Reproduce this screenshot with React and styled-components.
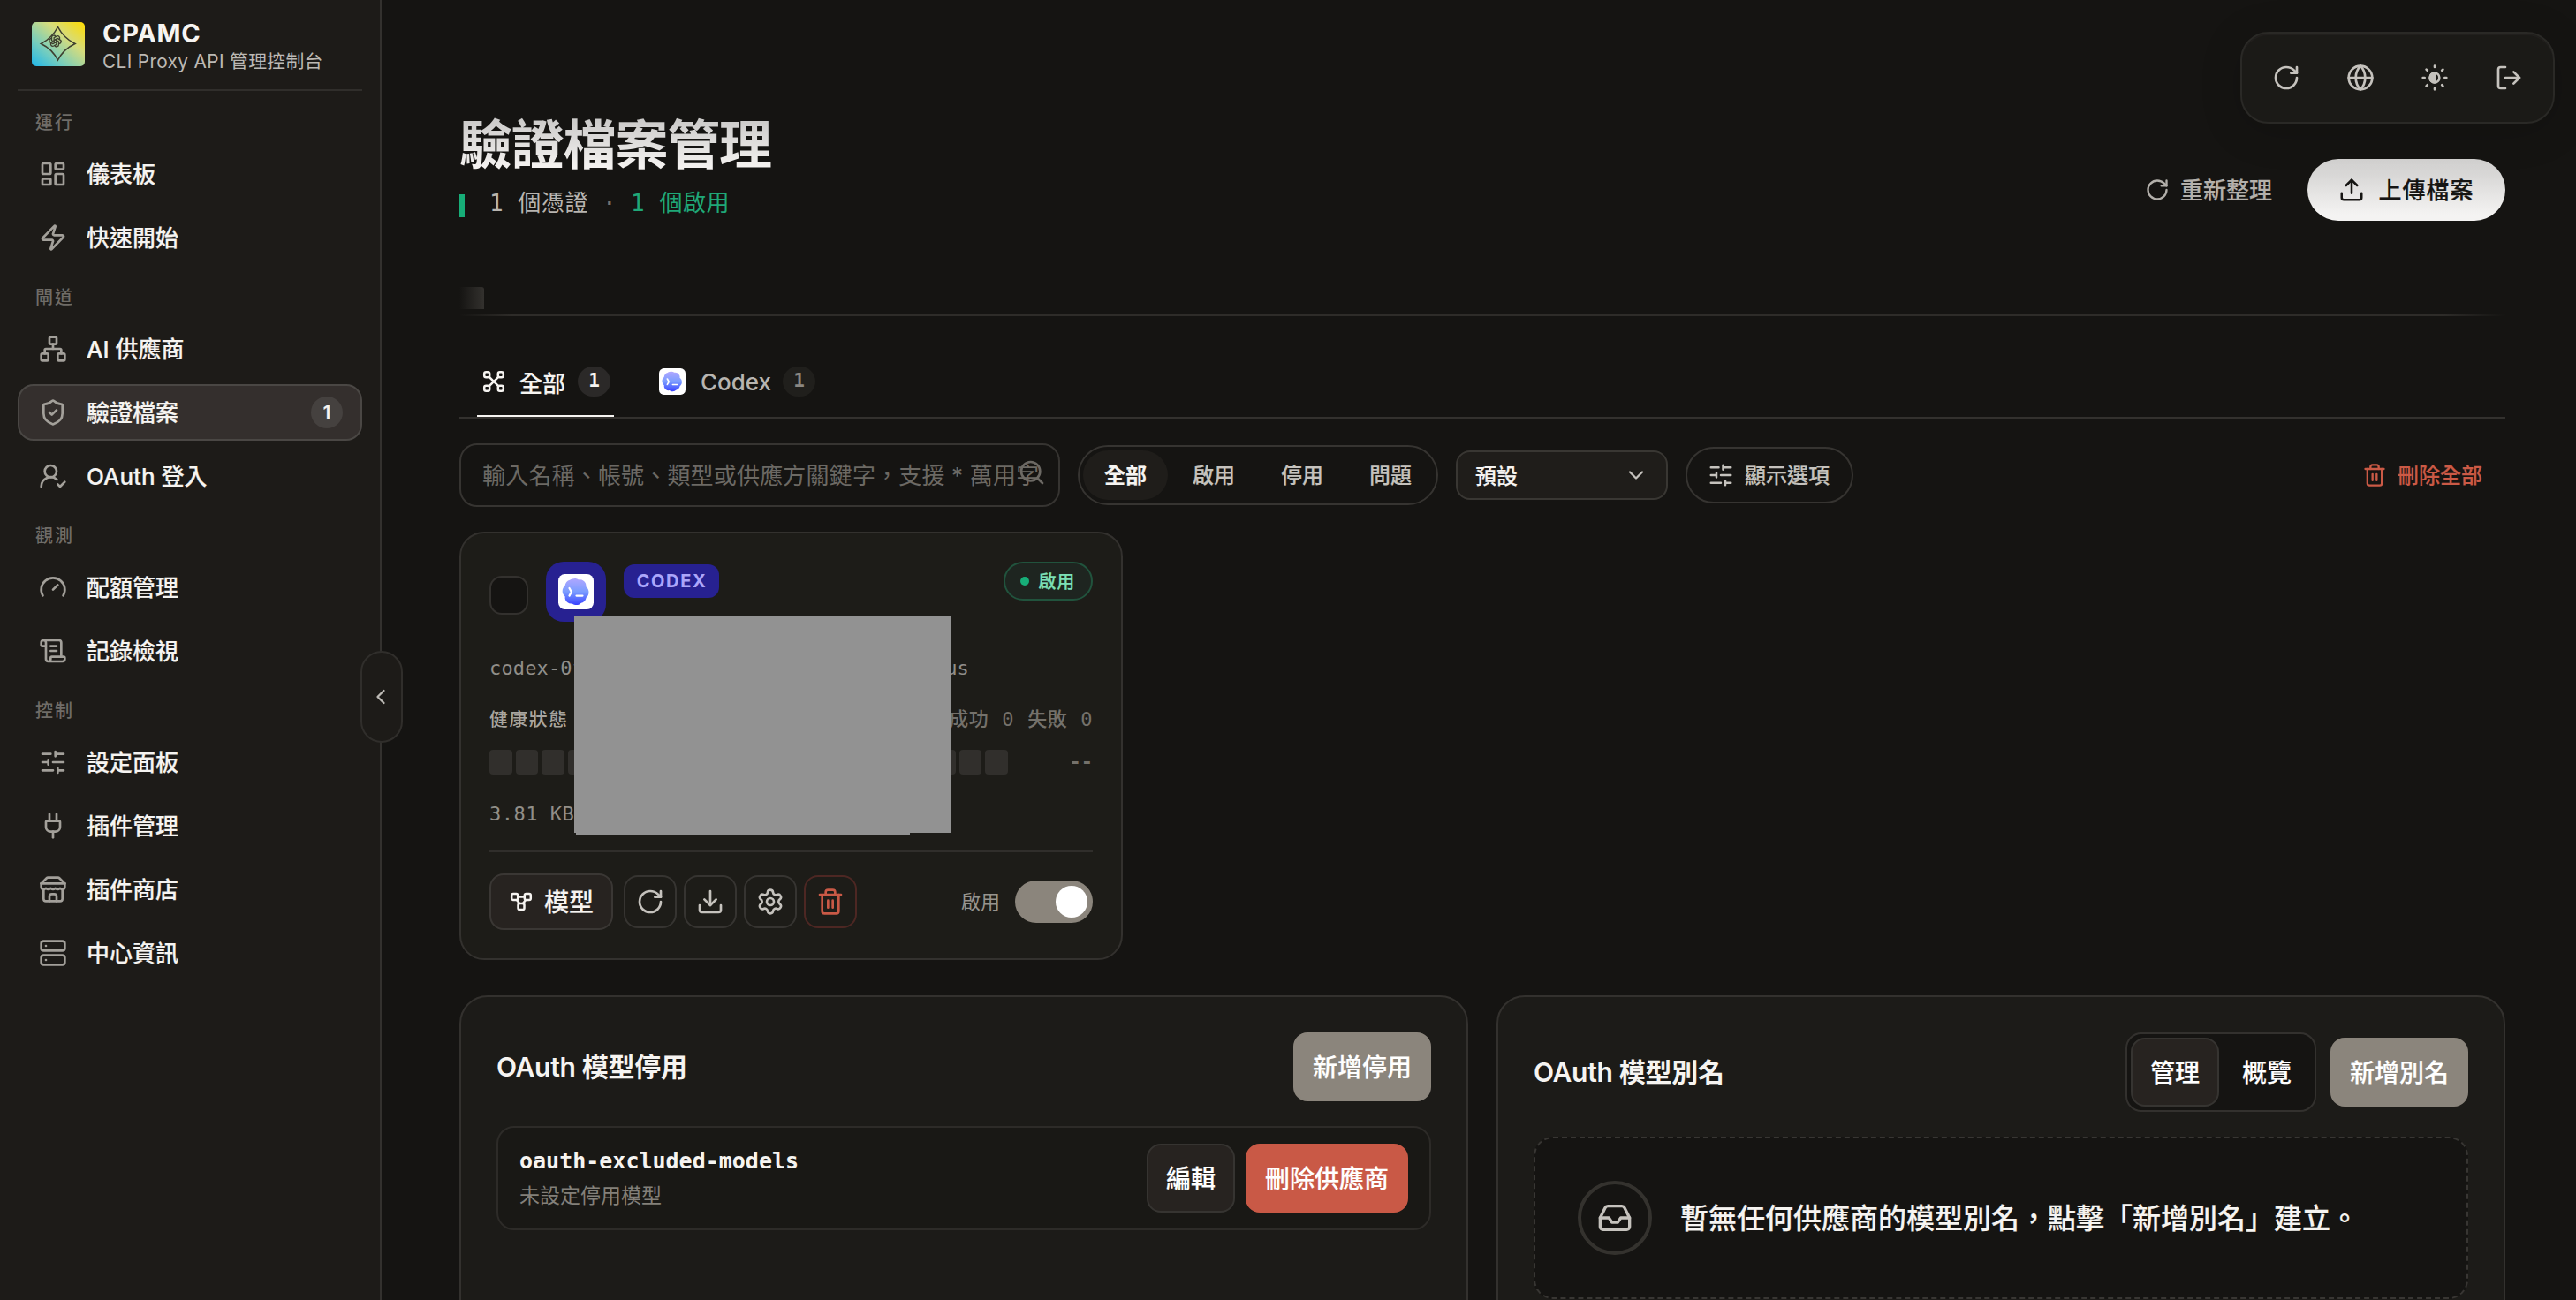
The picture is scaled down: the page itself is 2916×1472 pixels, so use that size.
import React, { useState } from "react";
import styled, { createGlobalStyle, css } from "styled-components";
import {
  ChevronDown,
  ChevronLeft,
  Download,
  Gauge,
  Globe,
  Inbox,
  LayoutDashboard,
  LogOut,
  Network,
  Plug,
  RotateCw,
  ScrollText,
  Search,
  Server,
  Settings,
  ShieldCheck,
  Trash2,
  Upload,
  Zap
} from "lucide-react";
import { TbBrandOpenai } from "react-icons/tb";

const sans = `Inter, "Noto Sans CJK TC", sans-serif`;
const mono = `"DejaVu Sans Mono", "Noto Sans CJK TC", monospace`;

// The CJK family has no 600, so medium gets a thin outline
const semibold = css`
  font-weight: 500;
  -webkit-text-stroke: 0.2px currentColor;
`;

const GlobalStyle = createGlobalStyle`
  * {
    box-sizing: border-box;
  }
  body {
    margin: 0;
    background: #151412;
    font-family: ${sans};
    color: #f6f4f1;
  }
  button {
    font-family: inherit;
    padding: 0;
    border: 0;
    background: none;
    color: inherit;
  }
  svg {
    display: block;
    flex-shrink: 0;
  }
`;

const Page = styled.div`
  position: relative;
  display: flex;
  width: 100%;
  height: 1472px;
  overflow: hidden;
`;

/* ---------- sidebar ---------- */

const Sidebar = styled.aside`
  position: relative;
  width: 432px;
  flex-shrink: 0;
  padding: 0 20px;
  background: #1d1b18;
  border-right: 2px solid #33312e;
`;

const Brand = styled.div`
  display: flex;
  align-items: center;
  gap: 20px;
  height: 103px;
  padding: 0 16px 1px;
  border-bottom: 2px solid #302e2b;
  .name {
    margin-top: 5px;
    font-size: 29px;
    font-weight: 700;
    line-height: 34px;
    letter-spacing: 0.7px;
  }
  .sub {
    font-size: 20.8px;
    line-height: 30px;
    letter-spacing: 0.35px;
    color: #bcb9b4;
    white-space: nowrap;
  }
`;

const GroupLabel = styled.div`
  padding: 20px 20px 10px;
  font-size: 20px;
  font-weight: 500;
  line-height: 32px;
  letter-spacing: 2px;
  color: #6f6c67;
`;

const NavList = styled.div`
  display: flex;
  flex-direction: column;
  gap: 8px;
`;

const NavItem = styled.a`
  display: flex;
  align-items: center;
  height: 64px;
  padding: 0 20px 0 22px;
  border: 2px solid ${p => (p.$active ? "#4a4744" : "transparent")};
  border-radius: 18px;
  background: ${p => (p.$active ? "#342f2d" : "none")};
  font-size: 26px;
  ${semibold}
  svg {
    margin-right: 22px;
    color: #a3a09a;
  }
  .text {
    padding-bottom: 4px;
  }
`;

const NavBadge = styled.span`
  margin-left: auto;
  width: 36px;
  height: 36px;
  border-radius: 18px;
  background: #45413f;
  font-size: 20px;
  font-weight: 600;
  line-height: 36px;
  text-align: center;
`;

const CollapseHandle = styled.button`
  position: absolute;
  top: 737px;
  right: -26px;
  display: flex;
  align-items: center;
  justify-content: center;
  width: 48px;
  height: 104px;
  padding-right: 2px;
  border: 2px solid #302e2b;
  border-radius: 24px;
  background: #1d1b18;
  color: #bcb9b4;
`;

/* ---------- top bar ---------- */

const FloatingBar = styled.div`
  position: absolute;
  top: 36px;
  right: 24px;
  display: flex;
  gap: 12px;
  padding: 14px;
  border: 2px solid #2a2926;
  border-radius: 32px;
  background: #1b1a17;
  box-shadow: inset 0 2px 0 #211f1d, 0 8px 48px rgba(0, 0, 0, 0.15);
  button {
    display: flex;
    align-items: center;
    justify-content: center;
    width: 72px;
    height: 72px;
    color: #c5c2bd;
  }
`;

const Main = styled.main`
  flex: 1;
  min-width: 0;
  padding: 128px 80px 0 88px;
`;

const Hero = styled.header`
  display: flex;
  justify-content: space-between;
  height: 122px;
  h1 {
    margin: 0;
    font-size: 60px;
    font-weight: 700;
    line-height: 72px;
    letter-spacing: -1.2px;
    color: transparent;
    background: linear-gradient(#c6c5c4 0%, #f4f2f0 85%);
    background-clip: text;
    -webkit-background-clip: text;
  }
`;

const Summary = styled.div`
  display: flex;
  align-items: center;
  margin-top: 14px;
  font-family: ${mono};
  font-size: 26px;
  line-height: 32px;
  letter-spacing: 0.52px;
  color: #b8b5b0;
  .bar {
    width: 6px;
    height: 26px;
    margin: 6px 28px 0 0;
    background: #17ae78;
  }
  .dot {
    margin: 0 16px;
    color: #76736e;
  }
  .on {
    color: #1fa878;
  }
`;

const HeroActions = styled.div`
  display: flex;
  gap: 40px;
  height: 70px;
  margin-top: 52px;
`;

const GhostButton = styled.button`
  display: flex;
  align-items: center;
  gap: 12px;
  font-size: 26px;
  ${semibold}
  color: #b3b0ab;
  span {
    padding-bottom: 3px;
  }
`;

const UploadButton = styled.button`
  display: flex;
  align-items: center;
  justify-content: center;
  gap: 15px;
  width: 224px;
  border-radius: 35px;
  background: linear-gradient(#d2d1d0, #d8d7d6 25%, #f4f3f2 90%);
  font-size: 26px;
  ${semibold}
  letter-spacing: 1px;
  color: #161513;
  span {
    padding-bottom: 3px;
  }
`;

const HeroRule = styled.div`
  margin-top: 75px;
  &::before {
    content: "";
    display: block;
    width: 28px;
    height: 25px;
    border-radius: 0 3px 0 0;
    background: linear-gradient(90deg, transparent, #33312e);
  }
  &::after {
    content: "";
    display: block;
    height: 2px;
    margin-top: 6px;
    background: linear-gradient(90deg, transparent, #2e2c29 60px, #2e2c29 calc(100% - 70px), transparent);
  }
`;

const Tabs = styled.div`
  display: flex;
  align-items: flex-end;
  gap: 47px;
  height: 116px;
  padding-left: 20px;
  border-bottom: 2px solid #33312e;
`;

const Tab = styled.div`
  display: flex;
  align-items: center;
  height: 80px;
  padding: 2px 4px 0;
  border-bottom: 2px solid ${p => (p.$active ? "#f6f4f1" : "transparent")};
  font-size: 26px;
  ${p => (p.$active ? semibold : "font-weight: 500;")}
  color: ${p => (p.$active ? "#f6f4f1" : "#b8b5b0")};
  svg {
    margin-right: ${p => (p.$active ? 14 : 17)}px;
  }
  span {
    width: 37px;
    height: 34px;
    margin-left: ${p => (p.$active ? 14 : 13)}px;
    border-radius: 18px;
    background: ${p => (p.$active ? "#2b2928" : "#201f1c")};
    color: ${p => (p.$active ? "#f6f4f1" : "#8a8782")};
    font-family: ${mono};
    font-size: 21px;
    font-weight: 700;
    line-height: 33px;
    text-align: center;
    -webkit-text-stroke: 0;
  }
`;

/* ---------- filters ---------- */

const Filters = styled.div`
  display: flex;
  align-items: center;
  gap: 20px;
  height: 72px;
  margin-top: 28px;
`;

const SearchBox = styled.div`
  position: relative;
  width: 680px;
  height: 72px;
  padding: 0 24px;
  border: 2px solid #363431;
  border-radius: 20px;
  font-size: 26px;
  line-height: 70px;
  letter-spacing: 0.18px;
  color: #6c6964;
  white-space: nowrap;
  svg {
    position: absolute;
    top: 15px;
    right: 14px;
  }
`;

const Segmented = styled.div`
  display: flex;
  gap: 4px;
  height: 68px;
  padding: 4px;
  border: 2px solid #363431;
  border-radius: 34px;
`;

const Segment = styled.button`
  width: 96px;
  height: 56px;
  border-radius: 28px;
  background: ${p => (p.$active ? "#1f1d1a" : "none")};
  font-size: 24px;
  ${semibold}
  font-weight: ${p => (p.$active ? 700 : 500)};
  line-height: 57px;
  color: ${p => (p.$active ? "#f6f4f1" : "#c5c2bd")};
`;

const Select = styled.div`
  display: flex;
  align-items: center;
  justify-content: space-between;
  width: 240px;
  height: 56px;
  padding: 0 20px;
  border: 2px solid #393733;
  border-radius: 16px;
  background: #1f1d1a;
  font-size: 24px;
  ${semibold}
  span {
    padding-bottom: 2px;
  }
  svg {
    color: #c5c2bd;
  }
`;

const OptionsButton = styled.button`
  display: flex;
  align-items: center;
  justify-content: center;
  gap: 12px;
  width: 190px;
  height: 64px;
  padding-right: 2px;
  border: 2px solid #363431;
  border-radius: 32px;
  font-size: 24px;
  ${semibold}
  color: #c5c2bd;
  span {
    padding-bottom: 3px;
  }
`;

const DeleteAll = styled.button`
  display: flex;
  align-items: center;
  gap: 12px;
  margin-left: auto;
  padding-right: 26px;
  font-size: 24px;
  ${semibold}
  color: #cb5a46;
  span {
    padding-bottom: 3px;
  }
`;

/* ---------- credential card ---------- */

const Card = styled.section`
  position: relative;
  width: 751px;
  height: 485px;
  margin-top: 28px;
  padding: 32px;
  border: 2px solid #33312e;
  border-radius: 28px;
  background: #1d1c18;
`;

const CardHeader = styled.div`
  display: flex;
  align-items: flex-start;
  height: 68px;
`;

const Checkbox = styled.div`
  width: 44px;
  height: 44px;
  margin: 16px 20px 0 0;
  border: 2px solid #33312e;
  border-radius: 14px;
  background: #151412;
`;

const ProviderIcon = styled.div`
  display: flex;
  align-items: center;
  justify-content: center;
  width: 68px;
  height: 68px;
  border-radius: 20px;
  background: #272191;
`;

const ProviderTag = styled.div`
  width: 108px;
  height: 38px;
  margin: 3px 0 0 20px;
  border-radius: 12px;
  background: #272191;
  font-size: 20px;
  font-weight: 700;
  line-height: 39px;
  letter-spacing: 1.6px;
  text-indent: 1px;
  text-align: center;
  color: #aba6fa;
`;

const StatusPill = styled.div`
  display: flex;
  align-items: center;
  gap: 10px;
  height: 44px;
  margin-left: auto;
  padding: 0 18px 0 17px;
  border: 2px solid #21533d;
  border-radius: 22px;
  background: #1e2520;
  font-size: 20px;
  ${semibold}
  letter-spacing: 0.8px;
  color: #7ce0b6;
  span {
    padding-bottom: 2px;
  }
  &::before {
    content: "";
    width: 10px;
    height: 10px;
    border-radius: 5px;
    background: #17ae78;
  }
`;

const FileName = styled.div`
  display: flex;
  width: 543px;
  justify-content: space-between;
  margin-top: 39px;
  font-family: ${mono};
  font-size: 22px;
  line-height: 28px;
  letter-spacing: 0.15px;
  color: #918e88;
`;

const HealthRow = styled.div`
  display: flex;
  justify-content: space-between;
  margin-top: 30px;
  line-height: 28px;
  .label {
    font-size: 20.8px;
    font-weight: 500;
    letter-spacing: 1.6px;
    color: #a8a59f;
  }
  .stats {
    font-family: ${mono};
    font-size: 22px;
    font-weight: 500;
    letter-spacing: 0.45px;
    word-spacing: 1.5px;
    color: #74716b;
  }
`;

const HealthBlocks = styled.div`
  display: flex;
  gap: 4px;
  height: 28px;
  margin-top: 20px;
  i {
    flex: 1;
    border-radius: 4px;
    background: #312f2c;
  }
  span {
    width: 92px;
    text-align: right;
    font-family: ${mono};
    font-size: 22px;
    font-weight: 700;
    line-height: 28px;
    color: #74716b;
  }
`;

const FileSize = styled.div`
  margin-top: 30px;
  padding-bottom: 28px;
  border-bottom: 2px solid #302e2b;
  font-family: ${mono};
  font-size: 22px;
  line-height: 29px;
  height: 58px;
  letter-spacing: 0.5px;
  color: #918e88;
`;

const CardFooter = styled.div`
  display: flex;
  align-items: center;
  gap: 8px;
  height: 64px;
  margin-top: 24px;
`;

const ModelButton = styled.button`
  display: flex;
  align-items: center;
  justify-content: center;
  gap: 12px;
  width: 140px;
  height: 64px;
  margin-right: 4px;
  border: 2px solid #3a3734;
  border-radius: 16px;
  background: #272320;
  font-size: 28px;
  ${semibold}
  span {
    padding-bottom: 2px;
  }
`;

const IconButton = styled.button`
  display: flex;
  align-items: center;
  justify-content: center;
  width: 60px;
  height: 60px;
  border: 2px solid ${p => (p.$danger ? "#4d2723" : "#363431")};
  border-radius: 16px;
  color: ${p => (p.$danger ? "#c95946" : "#c5c2bd")};
`;

const Toggle = styled.label`
  display: flex;
  align-items: center;
  gap: 17px;
  margin-left: auto;
  font-size: 22px;
  color: #97948e;
  span {
    padding-bottom: 4px;
  }
  i {
    width: 88px;
    height: 48px;
    padding: 6px;
    border-radius: 24px;
    background: #8b857c;
  }
  i::after {
    content: "";
    display: block;
    width: 36px;
    height: 36px;
    margin-left: auto;
    border-radius: 50%;
    background: #fff;
  }
`;

// Opaque cover over the private part of the card
const Redaction = styled.div`
  position: absolute;
  top: 93px;
  left: 128px;
  width: 427px;
  height: 246px;
  background: #929292;
  &::after {
    content: "";
    position: absolute;
    top: 100%;
    left: 2px;
    width: 378px;
    height: 2px;
    background: #929292;
  }
`;

/* ---------- OAuth panels ---------- */

const Panels = styled.div`
  display: grid;
  grid-template-columns: 1fr 1fr;
  gap: 32px;
  height: 420px;
  margin-top: 40px;
`;

const Panel = styled.section`
  padding: 40px;
  border: 2px solid #33312e;
  border-radius: 32px;
  background: #1c1b18;
`;

const PanelHeader = styled.div`
  display: flex;
  align-items: center;
  gap: 16px;
  margin-bottom: 28px;
  h2 {
    margin: 0 auto 0 0;
    font-size: 30px;
    font-weight: 600;
    line-height: 40px;
    letter-spacing: -0.3px;
  }
`;

const variants = {
  primary: css`
    background: #8b857c;
    border-color: #8b857c;
  `,
  secondary: css`
    background: #272320;
    border-color: #363431;
  `,
  danger: css`
    background: #c95946;
    border-color: #c95946;
  `,
  plain: css`
    background: none;
    border-color: transparent;
  `
};

const Button = styled.button`
  height: 78px;
  padding: 0 20px 2px;
  border: 2px solid;
  border-radius: 16px;
  font-size: 28px;
  ${semibold}
  white-space: nowrap;
  color: #fff;
  ${p => variants[p.$variant]}
`;

const ViewSwitch = styled.div`
  display: flex;
  gap: 4px;
  padding: 4px;
  border: 2px solid #33312e;
  border-radius: 18px;
  background: #151412;
`;

const ExcludedRow = styled.div`
  display: flex;
  align-items: center;
  gap: 12px;
  height: 118px;
  padding: 0 24px;
  border: 2px solid #2d2b28;
  border-radius: 20px;
  background: #191815;
  .text {
    margin: 2px auto 0 0;
  }
  .key {
    font-family: ${mono};
    font-size: 25px;
    font-weight: 700;
    line-height: 38px;
  }
  .hint {
    font-size: 23px;
    line-height: 40px;
    color: #83807a;
  }
`;

const EmptyState = styled.div`
  display: flex;
  align-items: center;
  gap: 32px;
  height: 184px;
  padding: 0 48px;
  border: 2px dashed #383633;
  border-radius: 22px;
  background: #151412;
  font-size: 32px;
  ${semibold}
  .message {
    padding-bottom: 4px;
  }
  .circle {
    display: flex;
    align-items: center;
    justify-content: center;
    width: 84px;
    height: 84px;
    border: 4px solid #34322e;
    border-radius: 50%;
    color: #c5c2bd;
  }
`;

/* ---------- custom icons ---------- */

const stroke = {
  fill: "none",
  stroke: "currentColor",
  strokeWidth: 2,
  strokeLinecap: "round",
  strokeLinejoin: "round"
};

const UserCheckIcon = ({ size }) => (
  <svg width={size} height={size} viewBox="0 0 24 24" {...stroke}>
    <path d="M2 21a8 8 0 0 1 13.292-6" />
    <circle cx="10" cy="8" r="5" />
    <path d="m16 19 2 2 4-4" />
  </svg>
);

const SlidersIcon = ({ size }) => (
  <svg width={size} height={size} viewBox="0 0 24 24" {...stroke}>
    <path d="M10 5H3M12 19H3M14 3v4M16 17v4M21 12h-9M21 19h-5M21 5h-7M8 10v4M8 12H3" />
  </svg>
);

const StoreIcon = ({ size }) => (
  <svg width={size} height={size} viewBox="0 0 24 24" {...stroke}>
    <path d="m2 7 4.41-4.41A2 2 0 0 1 7.83 2h8.34a2 2 0 0 1 1.42.59L22 7" />
    <path d="M4 12v8a2 2 0 0 0 2 2h12a2 2 0 0 0 2-2v-8" />
    <path d="M15 22v-4a2 2 0 0 0-2-2h-2a2 2 0 0 0-2 2v4M2 7h20" />
    <path d="M22 7v3a2 2 0 0 1-2 2 2.7 2.7 0 0 1-1.59-.63.7.7 0 0 0-.82 0A2.7 2.7 0 0 1 16 12a2.7 2.7 0 0 1-1.59-.63.7.7 0 0 0-.82 0A2.7 2.7 0 0 1 12 12a2.7 2.7 0 0 1-1.59-.63.7.7 0 0 0-.82 0A2.7 2.7 0 0 1 8 12a2.7 2.7 0 0 1-1.59-.63.7.7 0 0 0-.82 0A2.7 2.7 0 0 1 4 12a2 2 0 0 1-2-2V7" />
  </svg>
);

const ThemeIcon = () => (
  <svg width="32" height="32" viewBox="0 0 24 24" {...stroke}>
    <circle cx="12" cy="12" r="4" />
    <path d="M12 8a4 4 0 0 0 0 8z" fill="currentColor" />
    <path d="M12 2v1M12 21v1M4.93 4.93l.9.9M18.17 18.17l.9.9M2 12h1.5M20.5 12H22M5.83 18.17l-.9.9M19.07 4.93l-.9.9" />
  </svg>
);

const AllIcon = () => (
  <svg width="30" height="28" viewBox="0 0 30 28" {...stroke} strokeWidth="2.5">
    <rect x="4.2" y="3.2" width="6" height="6" rx="2" />
    <rect x="19.8" y="3.2" width="6" height="6" rx="2" />
    <rect x="4.2" y="18.8" width="6" height="6" rx="2" />
    <rect x="19.8" y="18.8" width="6" height="6" rx="2" />
    <path d="m9.8 8.8 10.4 10.4M20.2 8.8 9.8 19.2" />
  </svg>
);

const ModelIcon = () => (
  <svg width="28" height="28" viewBox="0 0 28 28" {...stroke} strokeWidth="2.5">
    <rect x="3.2" y="5" width="7" height="7" rx="1.8" />
    <rect x="17.8" y="5" width="7" height="7" rx="1.8" />
    <rect x="10.5" y="16" width="7" height="7" rx="1.8" />
    <path d="M10.2 8.5h7.6M9 12l3 4M19 12l-3 4" />
  </svg>
);

const CodexLogo = ({ size }) => (
  <svg width={size} height={size} viewBox="0 0 40 40">
    <defs>
      <linearGradient id="codex" x1="0" y1="0" x2="0" y2="1">
        <stop offset="0" stopColor="#b1a7ff" />
        <stop offset="0.5" stopColor="#7a9dff" />
        <stop offset="1" stopColor="#3941ff" />
      </linearGradient>
    </defs>
    <rect width="40" height="40" rx="7.5" fill="#fff" />
    <path
      fill="url(#codex)"
      d="M16 5.4c2.6-1 5.2-.5 7 1 3.2-.7 6.6 1 7.9 4.2.5 1.2.6 2.500.4 3.700 2.500 1.900 3.600 4.700 3.100 7.600-.4 2.200-1.400 3.700-2.900 4.900-.4 3.300-2.900 5.700-6 6.100-2 2.200-4.900 2.700-7.500 1.800-.9-.3-1.600-.8-2.200-1.300-3.300.6-6.500-1.100-7.700-4.100-.5-1.200-.6-2.600-.4-3.800-2.400-1.900-3.500-4.800-2.900-7.700.4-1.900 1.400-3.400 2.800-4.500.3-3.500 2.500-6 5.400-6.600.8-.7 1.800-1.100 3-1.300Z"
    />
    <path d="m12.5 16 2.4 4.3-2.4 4.3M20.5 24.6h7" fill="none" stroke="#fff" strokeWidth="2.2" strokeLinecap="round" strokeLinejoin="round" />
  </svg>
);

const BrandLogo = () => (
  <svg width="60" height="50" viewBox="0 0 60 50">
    <defs>
      <linearGradient id="brand" x1="0" y1="1" x2="1" y2="0">
        <stop offset="0" stopColor="#1fb6ea" />
        <stop offset="0.3" stopColor="#74cdbf" />
        <stop offset="0.65" stopColor="#d6dc7c" />
        <stop offset="1" stopColor="#ffdc00" />
      </linearGradient>
    </defs>
    <rect width="60" height="50" rx="5" fill="url(#brand)" />
    <path d="M29.5 5.5Q36 18 49 24.5 36 30.500 29.500 43 23 30.500 10.500 24.500 23 18 29.500 5.500Z" fill="none" stroke="#3f4030" strokeWidth="1.6" />
    <TbBrandOpenai x="18.5" y="13.5" width="22" height="22" color="#3f4030" strokeWidth="2" />
  </svg>
);

/* ---------- data ---------- */

const navGroups = [
  {
    label: "運行",
    items: [
      { name: "儀表板", icon: LayoutDashboard },
      { name: "快速開始", icon: Zap }
    ]
  },
  {
    label: "閘道",
    items: [
      { name: "AI 供應商", icon: Network },
      { name: "驗證檔案", icon: ShieldCheck, badge: 1 },
      { name: "OAuth 登入", icon: UserCheckIcon }
    ]
  },
  {
    label: "觀測",
    items: [
      { name: "配額管理", icon: Gauge },
      { name: "記錄檢視", icon: ScrollText }
    ]
  },
  {
    label: "控制",
    items: [
      { name: "設定面板", icon: SlidersIcon },
      { name: "插件管理", icon: Plug },
      { name: "插件商店", icon: StoreIcon },
      { name: "中心資訊", icon: Server }
    ]
  }
];

const statusFilters = ["全部", "啟用", "停用", "問題"];

const AuthFileCard = () => (
  <Card>
    <CardHeader>
      <Checkbox />
      <ProviderIcon>
        <CodexLogo size={40} />
      </ProviderIcon>
      <ProviderTag>CODEX</ProviderTag>
      <StatusPill><span>啟用</span></StatusPill>
    </CardHeader>
    <FileName>
      <span>codex-0f</span>
      <span>us</span>
    </FileName>
    <HealthRow>
      <span className="label">健康狀態</span>
      <span className="stats">成功 0 失敗 0</span>
    </HealthRow>
    <HealthBlocks>
      {Array.from({ length: 20 }, (_, i) => (
        <i key={i} />
      ))}
      <span>--</span>
    </HealthBlocks>
    <FileSize>3.81 KB</FileSize>
    <CardFooter>
      <ModelButton>
        <ModelIcon />
        <span>模型</span>
      </ModelButton>
      <IconButton><RotateCw size={32} /></IconButton>
      <IconButton><Download size={32} /></IconButton>
      <IconButton><Settings size={32} /></IconButton>
      <IconButton $danger><Trash2 size={32} /></IconButton>
      <Toggle>
        <span>啟用</span>
        <i />
      </Toggle>
    </CardFooter>
    <Redaction />
  </Card>
);

const App = () => {
  const [page, setPage] = useState("驗證檔案");
  const [status, setStatus] = useState("全部");

  return (
    <Page lang="zh-Hant">
      <GlobalStyle />
      <Sidebar>
        <Brand>
          <BrandLogo />
          <div>
            <div className="name">CPAMC</div>
            <div className="sub">CLI Proxy API 管理控制台</div>
          </div>
        </Brand>
        {navGroups.map(group => (
          <div key={group.label}>
            <GroupLabel>{group.label}</GroupLabel>
            <NavList>
              {group.items.map(({ name, icon: Icon, badge }) => (
                <NavItem key={name} $active={name === page} onClick={() => setPage(name)}>
                  <Icon size={32} />
                  <span className="text">{name}</span>
                  {badge && <NavBadge>{badge}</NavBadge>}
                </NavItem>
              ))}
            </NavList>
          </div>
        ))}
        <CollapseHandle><ChevronLeft size={28} /></CollapseHandle>
      </Sidebar>

      <Main>
        <Hero>
          <div>
            <h1>驗證檔案管理</h1>
            <Summary>
              <span className="bar" />
              <span>1 個憑證</span>
              <span className="dot">·</span>
              <span className="on">1 個啟用</span>
            </Summary>
          </div>
          <HeroActions>
            <GhostButton>
              <RotateCw size={28} />
              <span>重新整理</span>
            </GhostButton>
            <UploadButton>
              <Upload size={30} />
              <span>上傳檔案</span>
            </UploadButton>
          </HeroActions>
        </Hero>
        <HeroRule />

        <Tabs>
          <Tab $active>
            <AllIcon />
            全部
            <span>1</span>
          </Tab>
          <Tab>
            <CodexLogo size={30} />
            Codex
            <span>1</span>
          </Tab>
        </Tabs>

        <Filters>
          <SearchBox>
            輸入名稱、帳號、類型或供應方關鍵字，支援 * 萬用字
            <Search size={32} />
          </SearchBox>
          <Segmented>
            {statusFilters.map(name => (
              <Segment key={name} $active={name === status} onClick={() => setStatus(name)}>
                {name}
              </Segment>
            ))}
          </Segmented>
          <Select>
            <span>預設</span>
            <ChevronDown size={28} />
          </Select>
          <OptionsButton>
            <SlidersIcon size={30} />
            <span>顯示選項</span>
          </OptionsButton>
          <DeleteAll>
            <Trash2 size={28} />
            <span>刪除全部</span>
          </DeleteAll>
        </Filters>

        <AuthFileCard />

        <Panels>
          <Panel>
            <PanelHeader>
              <h2>OAuth 模型停用</h2>
              <Button $variant="primary">新增停用</Button>
            </PanelHeader>
            <ExcludedRow>
              <div className="text">
                <div className="key">oauth-excluded-models</div>
                <div className="hint">未設定停用模型</div>
              </div>
              <Button $variant="secondary">編輯</Button>
              <Button $variant="danger">刪除供應商</Button>
            </ExcludedRow>
          </Panel>
          <Panel>
            <PanelHeader>
              <h2>OAuth 模型別名</h2>
              <ViewSwitch>
                <Button $variant="secondary">管理</Button>
                <Button $variant="plain">概覽</Button>
              </ViewSwitch>
              <Button $variant="primary">新增別名</Button>
            </PanelHeader>
            <EmptyState>
              <div className="circle"><Inbox size={40} /></div>
              <span className="message">暫無任何供應商的模型別名，點擊「新增別名」建立。</span>
            </EmptyState>
          </Panel>
        </Panels>
      </Main>

      <FloatingBar>
        <button><RotateCw size={32} /></button>
        <button><Globe size={32} /></button>
        <button><ThemeIcon /></button>
        <button><LogOut size={32} /></button>
      </FloatingBar>
    </Page>
  );
};

export default App;
